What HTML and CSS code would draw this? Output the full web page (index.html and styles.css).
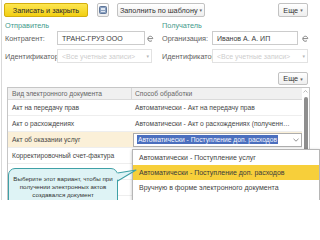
FILE: index.html
```html
<!DOCTYPE html>
<html lang="ru">
<head>
<meta charset="utf-8">
<title>Настройки обработки</title>
<link rel="stylesheet" href="styles.css">
</head>
<body>
<div class="page">
  <div class="toolbar">
    <div class="btn btn-primary">Записать и закрыть</div>
    <div class="btn btn-icon">
      <svg width="8" height="8" viewBox="0 0 8 8"><rect x="0.5" y="0.5" width="7" height="7" rx="1" fill="#8aa0bf" stroke="#5f7699"/><rect x="2" y="2" width="4" height="2" fill="#dfe7f2"/><rect x="2" y="5" width="4" height="1" fill="#dfe7f2"/></svg>
    </div>
    <div class="btn btn-fill">Заполнить по шаблону <span class="caret">▾</span></div>
    <div class="btn btn-more">Еще <span class="caret">▾</span></div>
  </div>

  <div class="parties">
    <div class="party party-sender">
      <div class="party-title">Отправитель</div>
      <div class="field">
        <span class="label">Контрагент:</span>
        <span class="input">ТРАНС-ГРУЗ ООО</span>
        <span class="open-btn"><svg width="7" height="7" viewBox="0 0 7 7"><path d="M1 3.6 H5.8 A2.5 2.5 0 1 0 5 5.6" fill="none" stroke="#7a7a7a" stroke-width="0.9"/></svg></span>
      </div>
      <div class="field">
        <span class="label">Идентификатор:</span>
        <span class="input input-disabled">&lt;Все учетные записи&gt;<span class="dd">▾</span></span>
      </div>
    </div>
    <div class="party party-receiver">
      <div class="party-title">Получатель</div>
      <div class="field">
        <span class="label">Организация:</span>
        <span class="input">Иванов А. А. ИП</span>
        <span class="open-btn"><svg width="7" height="7" viewBox="0 0 7 7"><path d="M1 3.6 H5.8 A2.5 2.5 0 1 0 5 5.6" fill="none" stroke="#7a7a7a" stroke-width="0.9"/></svg></span>
      </div>
      <div class="field">
        <span class="label">Идентификатор:</span>
        <span class="input input-disabled">&lt;Все учетные записи&gt;<span class="dd">▾</span></span>
      </div>
    </div>
  </div>

  <div class="table-bar">
    <div class="btn btn-more btn-small">Еще <span class="caret">▾</span></div>
  </div>

  <div class="grid">
    <div class="grid-body">
      <div class="row row-head">
        <div class="cell cell-kind">Вид электронного документа</div>
        <div class="cell cell-mode">Способ обработки</div>
      </div>
      <div class="row">
        <div class="cell cell-kind">Акт на передачу прав</div>
        <div class="cell cell-mode">Автоматически - Акт на передачу прав</div>
      </div>
      <div class="row">
        <div class="cell cell-kind">Акт о расхождениях</div>
        <div class="cell cell-mode">Автоматически - Акт о расхождениях (полученный от поставщика)</div>
      </div>
      <div class="row row-current">
        <div class="cell cell-kind">Акт об оказании услуг</div>
        <div class="cell cell-mode">
          <div class="editor"><span class="selection">Автоматически - Поступление доп. расходов</span><span class="editor-dd"><svg width="6" height="4" viewBox="0 0 6 4"><path d="M0.5 0.8 L3 3.2 L5.5 0.8" fill="none" stroke="#888" stroke-width="0.9"/></svg></span></div>
        </div>
      </div>
      <div class="row">
        <div class="cell cell-kind">Корректировочный счет-фактура</div>
        <div class="cell cell-mode"></div>
      </div>
      <div class="row">
        <div class="cell cell-kind cell-tail"><span class="tail-text">о…</span></div>
        <div class="cell cell-mode"></div>
      </div>
      <div class="row">
        <div class="cell cell-kind"></div>
        <div class="cell cell-mode"></div>
      </div>
    </div>
    <div class="scrollbar">
      <svg class="scroll-up" width="5" height="3" viewBox="0 0 5 3"><path d="M0.5 2.5 L2.5 0.5 L4.5 2.5" fill="none" stroke="#aaa" stroke-width="0.8"/></svg>
      <div class="thumb"></div>
    </div>
  </div>

  <div class="dropdown">
    <div class="dd-item">Автоматически - Поступление услуг</div>
    <div class="dd-item dd-item-active">Автоматически - Поступление доп. расходов</div>
    <div class="dd-item">Вручную в форме электронного документа</div>
  </div>

  <div class="tooltip">Выберите этот вариант, чтобы при получении электронных актов создавался документ</div>
  <svg class="tooltip-tail" width="26" height="18" viewBox="0 0 26 18">
    <path d="M1 7.5 L22 4 L1 15 Z" fill="#def3f5"/>
    <path d="M3.6 7 L22 4 L3.6 15" fill="none" stroke="#3fa0a6" stroke-width="1.2" stroke-linejoin="round"/>
  </svg>
</div>
</body>
</html>
```

FILE: styles.css
```css
* {
  box-sizing: border-box;
}

html, body {
  margin: 0;
  padding: 0;
  background: #ffffff;
}

body {
  font-family: "Liberation Sans", Arial, sans-serif;
  color: #444444;
  font-size: 7.3px;
}

.page {
  position: relative;
  width: 319px;
  height: 200px;
  margin-left: 1px;
  border-left: 1px solid #d9d9d9;
  overflow: hidden;
}

/* toolbar */
.toolbar {
  display: flex;
  align-items: center;
  padding: 3px 12px 0 2px;
}

.btn {
  display: flex;
  align-items: center;
  justify-content: center;
  height: 14px;
  border: 1px solid #c2c2c2;
  border-radius: 2px;
  background: linear-gradient(#ffffff, #eeeeee);
  color: #333333;
  font-size: 7.3px;
  white-space: nowrap;
  padding: 0 3px;
}

.btn-primary {
  width: 84px;
  background: linear-gradient(#fde650, #f2cf12);
  border-color: #d3ae0c;
  color: #2a2a2a;
}

.btn-icon {
  width: 12px;
  margin-left: 9px;
  padding: 0;
}

.btn-fill {
  width: 88px;
  margin-left: 8px;
}

.btn-more {
  width: 30px;
  margin-left: auto;
}

.btn-small {
  height: 13px;
}

.caret {
  font-family: "DejaVu Sans", sans-serif;
  font-size: 5px;
  color: #666666;
  margin-left: 2px;
}

/* parties */
.parties {
  display: flex;
  padding-left: 3px;
  margin-top: 4px;
}

.party-sender {
  width: 157px;
}

.party-receiver {
  width: 150px;
}

.party-title {
  height: 10px;
  line-height: 9px;
  color: #3f9b8b;
  font-size: 7.3px;
}

.field {
  display: flex;
  align-items: center;
  height: 14px;
  margin-bottom: 4px;
}

.label {
  color: #5e5e5e;
  white-space: nowrap;
}

.party-sender .label {
  width: 52px;
}

.party-receiver .label {
  width: 50px;
}

.input {
  display: flex;
  align-items: center;
  height: 14px;
  border: 1px solid #cccccc;
  background: #ffffff;
  color: #3a3a3a;
  font-size: 7px;
  padding: 0 4px;
  white-space: nowrap;
  overflow: hidden;
}

.party-sender .input {
  width: 88px;
}

.party-receiver .input {
  width: 86px;
}

.party-sender .input-disabled {
  width: 95px;
}

.party-receiver .input-disabled {
  width: 96px;
}

.input-disabled {
  border-color: #e2e2e2;
  color: #cdcdcd;
  justify-content: space-between;
  padding-right: 2px;
}

.dd {
  font-family: "DejaVu Sans", sans-serif;
  font-size: 5px;
  color: #b5b5b5;
}

.open-btn {
  display: flex;
  align-items: center;
  justify-content: center;
  width: 10px;
  height: 14px;
}

.party-receiver .open-btn {
  width: 14px;
}

/* table */
.table-bar {
  display: flex;
  padding-right: 12px;
  margin-top: 5px;
}

.grid {
  display: flex;
  width: 303px;
  margin: 2px 0 0 5px;
  border: 1px solid #c6c6c6;
  border-bottom: none;
  height: 120px;
}

.grid-body {
  flex: 1;
  min-width: 0;
}

.row {
  display: flex;
  height: 16px;
  border-bottom: 1px solid #eeeeee;
  font-size: 6.7px;
  color: #474747;
}

.row-head {
  height: 12px;
  background: #f0f0f0;
  border-bottom: 1px solid #dadada;
  color: #666666;
}

.row-current {
  background: #fbf0d8;
}

.cell {
  display: flex;
  align-items: center;
  white-space: nowrap;
  overflow: hidden;
}

.cell-kind {
  width: 124px;
  padding-left: 4px;
  flex-shrink: 0;
}

.cell-tail {
  justify-content: flex-end;
  padding-right: 12px;
}

.tail-text {
  color: #6a6a6a;
}

.row-head .cell-kind {
  border-right: 1px solid #d6d6d6;
}

.cell-mode {
  flex: 1;
  min-width: 0;
  padding-left: 3px;
  padding-right: 10px;
  display: block;
  line-height: 16px;
  text-overflow: ellipsis;
}

.row-head .cell-mode {
  line-height: 11px;
}

.row-current .cell-mode {
  display: flex;
  padding: 0 0 0 1px;
}

.editor {
  display: flex;
  align-items: center;
  justify-content: space-between;
  width: 100%;
  height: 14px;
  border: 1px solid #adadad;
  background: #ffffff;
  padding: 0 2px 0 3px;
}

.selection {
  background: #4b6fbe;
  color: #f4f6ff;
  line-height: 9px;
  padding: 0 1px;
}

.editor-dd {
  display: flex;
  align-items: center;
}

.scrollbar {
  width: 7px;
  display: flex;
  flex-direction: column;
  align-items: center;
  padding-top: 2px;
}

.thumb {
  width: 4px;
  height: 100px;
  margin-top: 4px;
  background: #8e8e8e;
  border-radius: 2px;
}

/* dropdown overlay */
.dropdown {
  position: absolute;
  left: 130px;
  top: 149px;
  width: 188px;
  height: 60px;
  background: #ffffff;
  border: 1px solid #b6b6b6;
  box-shadow: 0 1px 3px rgba(0, 0, 0, 0.25);
  font-size: 7px;
  color: #444444;
}

.dd-item {
  height: 15px;
  line-height: 15px;
  padding-left: 6px;
  white-space: nowrap;
}

.dd-item-active {
  background: #f7cf3a;
  color: #3a3a3a;
}

/* tooltip overlay */
.tooltip {
  position: absolute;
  left: 6px;
  top: 168px;
  width: 110px;
  height: 44px;
  padding: 6px 4px 0;
  border: 1.5px solid #3fa0a6;
  border-radius: 7px;
  background: #def3f5;
  color: #333333;
  font-size: 6.2px;
  line-height: 8px;
  text-align: center;
}

.tooltip-tail {
  position: absolute;
  left: 112px;
  top: 166px;
}
```
